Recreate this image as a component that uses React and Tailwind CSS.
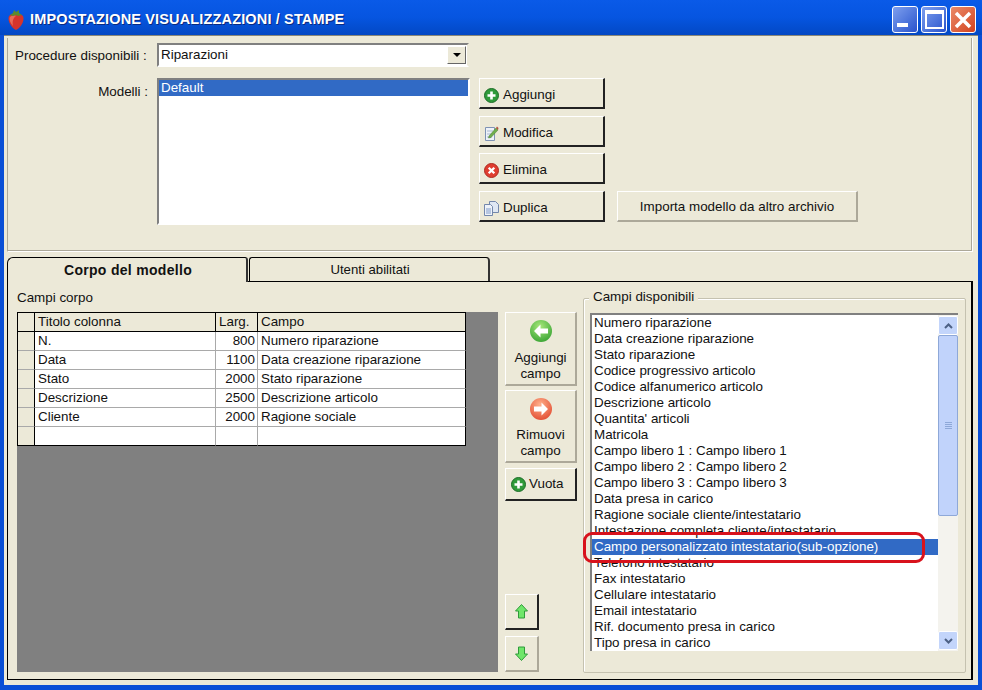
const font = "font-['Liberation_Sans',Arial,sans-serif]";

const fields = [
  'Numero riparazione',
  'Data creazione riparazione',
  'Stato riparazione',
  'Codice progressivo articolo',
  'Codice alfanumerico articolo',
  'Descrizione articolo',
  "Quantita' articoli",
  'Matricola',
  'Campo libero 1 : Campo libero 1',
  'Campo libero 2 : Campo libero 2',
  'Campo libero 3 : Campo libero 3',
  'Data presa in carico',
  'Ragione sociale cliente/intestatario',
  'Intestazione completa cliente/intestatario',
  'Campo personalizzato intestatario(sub-opzione)',
  'Telefono intestatario',
  'Fax intestatario',
  'Cellulare intestatario',
  'Email intestatario',
  'Rif. documento presa in carico',
  'Tipo presa in carico',
];

const rows = [
  ['N.', '800', 'Numero riparazione'],
  ['Data', '1100', 'Data creazione riparazione'],
  ['Stato', '2000', 'Stato riparazione'],
  ['Descrizione', '2500', 'Descrizione articolo'],
  ['Cliente', '2000', 'Ragione sociale'],
  ['', '', ''],
];

function Strawberry() {
  return (
    <svg width="20" height="22" viewBox="0 0 18 22">
      <path d="M2 7 C5 4 13 4 16 7 C18 11 14 19 9 21 C4 19 0 11 2 7Z" fill="#d5342c" />
      <path d="M3 8 C5 6 8 6 9 7 C6 9 5 13 6 17 C3 14 2 10 3 8Z" fill="#e96a58" />
      <path d="M3 6 L6 4 L7 1 L9 3 L12 1 L12 4 L15 6 L11 7 L9 6 L6 7Z" fill="#5c8a2e" />
    </svg>
  );
}

function PlusIcon() {
  return (
    <svg width="15" height="15" viewBox="0 0 15 15">
      <circle cx="7.5" cy="7.5" r="7" fill="#2f9a3a" stroke="#1c6d27" />
      <path d="M7.5 3.5v8M3.5 7.5h8" stroke="#fff" strokeWidth="2.6" />
    </svg>
  );
}

function EditIcon() {
  return (
    <svg width="15" height="16" viewBox="0 0 15 16">
      <path d="M1.5 2.5h9v13h-9z" fill="#eef2f8" stroke="#7f93b5" />
      <path d="M3 6h6M3 9h6M3 12h5" stroke="#a9b8cf" />
      <path d="M5 11 L12 3 L14 5 L7 12.5 L4.5 13Z" fill="#6fae4c" stroke="#4c7f35" strokeWidth=".5" />
      <path d="M12 3l1-1.5 1.5 1.5-.5 2z" fill="#b5533c" />
    </svg>
  );
}

function DeleteIcon() {
  return (
    <svg width="15" height="15" viewBox="0 0 15 15">
      <circle cx="7.5" cy="7.5" r="7" fill="#df3d30" stroke="#ad2a20" />
      <path d="M4.7 4.7l5.6 5.6M10.3 4.7l-5.6 5.6" stroke="#fff" strokeWidth="2.3" />
    </svg>
  );
}

function CopyIcon() {
  return (
    <svg width="15" height="15" viewBox="0 0 15 15">
      <path d="M5.5 .5h6l3 3v8h-9z" fill="#dfe7f3" stroke="#7387ac" />
      <path d="M.5 3.5h6l2 2v9h-8z" fill="#eef2f8" stroke="#7387ac" />
      <path d="M2 8h5M2 10h5M2 12h5" stroke="#7f9acb" />
    </svg>
  );
}

function ArrowCircle({ dir }) {
  const green = dir === 'left';
  return (
    <svg width="24" height="24" viewBox="0 0 24 24">
      <defs>
        <radialGradient id={dir} cx=".45" cy=".3" r=".8">
          <stop offset="0" stopColor={green ? '#a8e87a' : '#ffb18c'} />
          <stop offset="1" stopColor={green ? '#2f9e2e' : '#e0442a'} />
        </radialGradient>
      </defs>
      <circle cx="12" cy="12" r="11" fill={`url(#${dir})`} />
      <path
        d={green ? 'M5 12l6.5-6.5v4h7.5v5h-7.5v4z' : 'M19 12l-6.5-6.5v4h-7.5v5h7.5v4z'}
        fill="#fff"
      />
    </svg>
  );
}

function ArrowBlock({ up }) {
  return (
    <svg width="13" height="15" viewBox="0 0 13 15">
      <path
        d={up ? 'M6.5 .5l6 6.5h-3v7h-6v-7h-3z' : 'M6.5 14.5l6-6.5h-3v-7h-6v7h-3z'}
        fill="#6fe66a"
        stroke="#2f9a3a"
      />
    </svg>
  );
}

function RaisedButton({ className, dark, children }) {
  return (
    <div
      className={`flex items-center border-t border-l border-t-white border-l-white border-r-2 border-b-2 bg-[#ece9d8] text-[13.4px] text-[#111] ${
        dark ? 'border-r-[#222] border-b-[#222]' : 'border-r-[#aca899] border-b-[#aca899]'
      } ${className}`}
    >
      {children}
    </div>
  );
}

function ToolButton({ icon, label, className = '' }) {
  return (
    <RaisedButton dark className={`h-[31px] w-[126px] gap-[4px] pt-[4px] pl-[4px] ${className}`}>
      {icon}
      <span>{label}</span>
    </RaisedButton>
  );
}

function Scrollbar() {
  return (
    <div className="flex w-[20px] shrink-0 flex-col bg-[#f4f3ee] py-[1px]">
      <div className="flex h-[19px] items-center justify-center rounded-[2px] border border-white bg-[#c3d5fb]">
        <svg width="9" height="6" viewBox="0 0 9 6">
          <path d="M1 5l3.5-3.5L8 5" fill="none" stroke="#4d6185" strokeWidth="2" />
        </svg>
      </div>
      <div className="flex h-[181px] items-center justify-center rounded-[2px] border border-[#8ea8d8] bg-[#c1d3fb]">
        <div className="flex w-[7px] flex-col gap-[1px]">
          {[0, 1, 2, 3].map((i) => (
            <div key={i} className="h-[1px] bg-[#8ea8d8]" />
          ))}
        </div>
      </div>
      <div className="mt-auto flex h-[19px] items-center justify-center rounded-[2px] border border-white bg-[#c3d5fb]">
        <svg width="9" height="6" viewBox="0 0 9 6">
          <path d="M1 1l3.5 3.5L8 1" fill="none" stroke="#4d6185" strokeWidth="2" />
        </svg>
      </div>
    </div>
  );
}

function TopPanel() {
  return (
    <div className="ml-[3px] mt-[2px] h-[214px] w-[966px] border-l border-l-[#aca899] border-b border-b-white border-r border-r-white pl-[7px] shadow-[inset_0_-1px_0_#aca899,inset_-1px_0_0_#aca899]">
      <div className="flex h-[40px] items-start pt-[5px]">
        <span className="w-[141px] whitespace-nowrap pt-[3px] text-[13.4px] text-[#111]">Procedure disponibili :</span>
        <div className="ml-[1px] flex h-[24px] w-[312px] items-center justify-between border-2 border-r-[#ece9d8] border-b-white border-t-[#808080] border-l-[#808080] bg-white pr-[1px] pl-[2px] text-[13.4px] text-[#111]">
          <span className="mt-[1px]">Riparazioni</span>
          <div className="flex h-[18px] w-[19px] items-center justify-center border border-t-white border-l-white border-r-[#666] border-b-[#666] bg-[#ece9d8]">
            <div className="h-0 w-0 border-x-[4px] border-t-[4px] border-x-transparent border-t-black" />
          </div>
        </div>
      </div>
      <div className="flex">
        <span className="mt-[4px] w-[141px] pr-[8px] text-right text-[13.4px] text-[#111]">Modelli :</span>
        <div className="ml-[1px] h-[147px] w-[313px] border-2 border-r-white border-b-white border-t-[#808080] border-l-[#808080] bg-white text-[13.4px]">
          <div className="h-[16px] bg-[#316ac5] pl-[2px] leading-[16px] text-white">Default</div>
        </div>
        <div className="ml-[9px] flex flex-col gap-[7px]">
          <ToolButton icon={<PlusIcon />} label="Aggiungi" />
          <ToolButton icon={<EditIcon />} label="Modifica" />
          <ToolButton icon={<DeleteIcon />} label="Elimina" className="mt-[-1px]" />
          <ToolButton icon={<CopyIcon />} label="Duplica" />
        </div>
        <RaisedButton className="ml-[12px] mt-[113px] h-[31px] w-[241px] justify-center pt-[2px]">
          Importa modello da altro archivio
        </RaisedButton>
      </div>
    </div>
  );
}

function Tabs() {
  return (
    <div className="mx-[3px] mt-[4px] flex h-[25px] items-end">
      <div className="z-10 mb-[-1px] flex h-[25px] w-[241px] items-center justify-center rounded-tl-[6px] rounded-tr-[3px] border-t border-l border-r-2 border-black border-r-[#333] bg-[#ece9d8] pl-[2px] text-[14px] font-bold tracking-[0.3px] text-[#111]">
        Corpo del modello
      </div>
      <div className="ml-[1px] flex h-[24px] w-[241px] items-center justify-center rounded-tl-[3px] rounded-tr-[4px] border border-b-0 border-black border-r-2 border-r-[#333] bg-[#ece9d8] pl-[2px] text-[13.2px] text-[#111]">
        Utenti abilitati
      </div>
    </div>
  );
}

function FieldsGrid() {
  const cell = 'h-[19px] border-r border-b border-[#a9a9a9] px-[3px] leading-[18px]';
  const head = 'h-[19px] border-r border-b border-black bg-[#ece9d8] px-[3px] leading-[18px]';
  return (
    <div className="h-[360px] w-[481px] bg-[#808080] text-[13.4px] text-[#111]">
      <div className="grid w-[449px] grid-cols-[17px_181px_42px_208px] border-t border-l border-black">
        <div className={head} />
        <div className={head}>Titolo colonna</div>
        <div className={head}>Larg.</div>
        <div className={head}>Campo</div>
        {rows.map((row, i) => {
          const edge = i === rows.length - 1 ? 'border-b-black' : '';
          return [
            <div key={`h${i}`} className={`h-[19px] border-r border-b border-r-black border-b-[#a9a9a9] bg-[#ece9d8] ${edge}`} />,
            <div key={`a${i}`} className={`${cell} bg-white ${edge}`}>{row[0]}</div>,
            <div key={`b${i}`} className={`${cell} bg-white pr-[2px] text-right ${edge}`}>{row[1]}</div>,
            <div key={`c${i}`} className={`${cell} border-r-black bg-white ${edge}`}>{row[2]}</div>,
          ];
        })}
      </div>
    </div>
  );
}

function MiddleButtons() {
  return (
    <div className="ml-[7px] flex h-[360px] w-[72px] flex-col">
      <RaisedButton className="h-[74px] w-[72px] flex-col pt-[6px] text-center leading-[16px]">
        <ArrowCircle dir="left" />
        <span className="mt-[7px]">Aggiungi<br />campo</span>
      </RaisedButton>
      <RaisedButton className="mt-[4px] h-[73px] w-[72px] flex-col pt-[6px] text-center leading-[16px]">
        <ArrowCircle dir="right" />
        <span className="mt-[6px]">Rimuovi<br />campo</span>
      </RaisedButton>
      <RaisedButton dark className="mt-[5px] h-[33px] w-[72px] gap-[3px] pl-[5px]">
        <PlusIcon />
        <span>Vuota</span>
      </RaisedButton>
      <div className="mt-auto flex flex-col gap-[6px]">
        <RaisedButton dark className="h-[36px] w-[34px] justify-center">
          <ArrowBlock up />
        </RaisedButton>
        <RaisedButton className="h-[36px] w-[34px] justify-center">
          <ArrowBlock />
        </RaisedButton>
      </div>
    </div>
  );
}

function AvailableFields() {
  return (
    <div className="relative ml-[6px] mt-[-14px] h-[375px] w-[383px] rounded-[2px] border border-[#c5c2b0] pt-[14px] pl-[6px] shadow-[inset_1px_1px_0_#fff]">
      <span className="absolute top-[-10px] left-[5px] bg-[#ece9d8] px-[4px] text-[13.4px] leading-[15px] text-[#111]">
        Campi disponibili
      </span>
      <div className="flex h-[338px] w-[368px] border-t-2 border-l-2 border-t-[#808080] border-l-[#808080] bg-white">
        <div className="min-w-0 flex-1 overflow-hidden text-[13.4px] leading-[16px] text-[#111]">
          {fields.map((f, i) => (
            <div
              key={f}
              className={`h-[16px] whitespace-nowrap pl-[2px] ${i === 14 ? 'bg-[#316ac5] text-white' : ''}`}
            >
              {f}
            </div>
          ))}
        </div>
        <Scrollbar />
      </div>
      {/* red marker drawn over the list */}
      <div className="absolute top-[233px] left-[-1px] h-[31px] w-[342px] rounded-[9px] border-[3px] border-[#d8121c]" />
    </div>
  );
}

export default function App() {
  return (
    <div className={`flex h-[690px] w-[982px] flex-col overflow-hidden bg-[#0a4fd6] ${font}`}>
      <div className="flex h-[35px] shrink-0 items-center bg-gradient-to-b from-[#0a5ae8] via-[#0655e0] to-[#0348c4] pt-[4px] pr-[6px] pl-[6px]">
        <Strawberry />
        <span className="ml-[4px] mt-[1px] text-[14.5px] font-bold tracking-[0.15px] text-white [text-shadow:1px_1px_0_#0a2a80]">
          IMPOSTAZIONE VISUALIZZAZIONI / STAMPE
        </span>
        <div className="ml-auto flex gap-[3px]">
          <div className="relative h-[27px] w-[26px] rounded-[3px] border border-white bg-gradient-to-br from-[#7f9fee] to-[#2a52cc]">
            <div className="absolute bottom-[5px] left-[4px] h-[4px] w-[11px] bg-white" />
          </div>
          <div className="flex h-[27px] w-[26px] items-center justify-center rounded-[3px] border border-white bg-gradient-to-br from-[#7f9fee] to-[#2a52cc]">
            <div className="h-[19px] w-[19px] border-2 border-t-[4px] border-white" />
          </div>
          <div className="flex h-[27px] w-[26px] items-center justify-center rounded-[3px] border border-white bg-gradient-to-br from-[#ea8a68] to-[#d2401c]">
            <svg width="20" height="20" viewBox="0 0 20 20">
              <path d="M3 3l14 14M17 3L3 17" stroke="#fff" strokeWidth="3.5" />
            </svg>
          </div>
        </div>
      </div>
      <div className="mx-[4px] flex h-[650px] flex-col border-t border-t-[#8a8878] bg-[#ece9d8]">
        <TopPanel />
        <Tabs />
        <div className="ml-[3px] flex h-[399px] w-[966px] flex-col border border-r-2 border-black bg-[#ece9d8] pl-[9px]">
          <div className="h-[30px] pt-[8px] text-[13.4px] leading-[15px] text-[#111]">Campi corpo</div>
          <div className="flex">
            <FieldsGrid />
            <MiddleButtons />
            <AvailableFields />
          </div>
        </div>
      </div>
    </div>
  );
}
